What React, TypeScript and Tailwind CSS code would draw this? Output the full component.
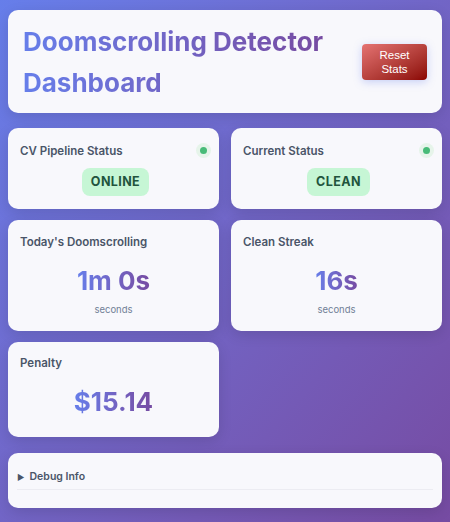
import React from "react";

const grad = "bg-gradient-to-r from-[#667eea] to-[#764ba2] bg-clip-text text-transparent";

function Dot() {
  return (
    <span className="flex h-[15px] w-[15px] items-center justify-center rounded-full bg-[#e6f4ea]">
      <span className="h-[7px] w-[7px] rounded-full bg-[#48bb78]" />
    </span>
  );
}

function Card({ children, className = "" }: { children: React.ReactNode; className?: string }) {
  return (
    <div className={"rounded-[10px] bg-[#f8f8fc] shadow-[0_4px_14px_rgba(0,0,0,0.12)] " + className}>{children}</div>
  );
}

const label = "text-[11.5px] leading-[14px] font-semibold text-[#4a5568]";
const badge = "rounded-[8px] bg-[#c6f6d5] px-[9px] py-[6px] text-[12.5px] leading-[16px] font-bold tracking-[0.4px] text-[#22543d]";
const big = "text-[26px] font-bold leading-[32px] " + grad;

export default function App() {
  return (
    <div
      className="min-h-[522px] w-[450px] bg-gradient-to-br from-[#667eea] to-[#764ba2] px-[8px] pt-[10px] pb-[14px]"
      style={{ fontFamily: "Inter, 'Noto Sans', sans-serif" }}
    >
      <Card className="flex items-center justify-between pl-[15px] pr-[15px] pt-[11px] pb-[10px]">
        <h1 className={"m-0 text-[26px] font-bold leading-[41px] " + grad}>
          Doomscrolling Detector
          <br />
          Dashboard
        </h1>
        <button
          className="h-[36px] w-[65px] rounded-[4px] bg-gradient-to-br from-[#e57373] to-[#8b0000] text-[11.5px] leading-[14px] text-white shadow-[0_2px_8px_rgba(102,126,234,0.35)]"
          style={{ fontFamily: "'Liberation Sans', Arial, sans-serif" }}
        >
          Reset
          <br />
          Stats
        </button>
      </Card>

      <div className="mt-[15px] grid grid-cols-2 gap-x-[12px] gap-y-[11px]">
        <Card className="h-[81px] pl-[12px] pr-[8px] pt-[15px]">
          <div className="flex items-center justify-between">
            <span className={label}>CV Pipeline Status</span>
            <Dot />
          </div>
          <div className="mt-[10px] flex justify-center">
            <span className={badge}>ONLINE</span>
          </div>
        </Card>
        <Card className="h-[81px] pl-[12px] pr-[8px] pt-[15px]">
          <div className="flex items-center justify-between">
            <span className={label}>Current Status</span>
            <Dot />
          </div>
          <div className="mt-[10px] flex justify-center">
            <span className={badge}>CLEAN</span>
          </div>
        </Card>

        <Card className="h-[111px] px-[12px] pt-[15px]">
          <div className={label}>Today's Doomscrolling</div>
          <div className="mt-[16px] text-center">
            <span className={big}>1m 0s</span>
          </div>
          <div className="mt-[7px] text-center text-[9.5px] leading-[12px] text-[#718096]">seconds</div>
        </Card>
        <Card className="h-[111px] px-[12px] pt-[15px]">
          <div className={label}>Clean Streak</div>
          <div className="mt-[16px] text-center">
            <span className={big}>16s</span>
          </div>
          <div className="mt-[7px] text-center text-[9.5px] leading-[12px] text-[#718096]">seconds</div>
        </Card>

        <Card className="h-[95px] px-[12px] pt-[14px]">
          <div className={label}>Penalty</div>
          <div className="mt-[16px] text-center">
            <span className={big}>$15.14</span>
          </div>
        </Card>
      </div>

      <Card className="mt-[16px] h-[55px] px-[9px] pt-[17px]">
        <div className="flex items-center gap-[5px] text-[10.5px] leading-[14px] font-semibold text-[#4a5568]">
          <span className="text-[8px]">▶</span>
          <span>Debug Info</span>
        </div>
        <div className="mt-[5px] h-px bg-[#ececf2]" />
      </Card>
    </div>
  );
}
